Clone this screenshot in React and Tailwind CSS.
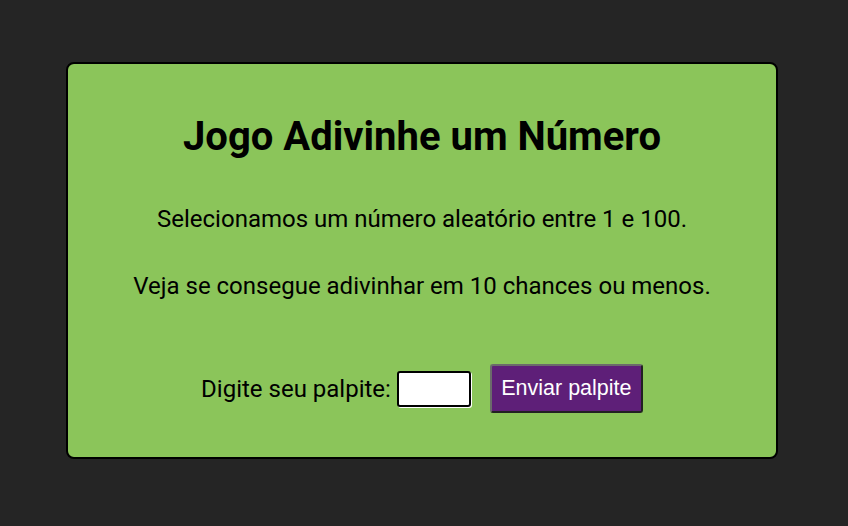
export default function App() {
  return (
    <div className="min-h-[526px] w-full bg-[#252525] pt-[62px]" style={{ fontFamily: "Roboto, 'Liberation Sans', sans-serif" }}>
      <div className="ml-[66px] flex h-[397px] w-[712px] flex-col items-center rounded-[8px] border-2 border-black bg-[#8bc55a] text-black">
        <h1 className="mt-[49px] text-[40px] font-bold leading-[48px]">Jogo Adivinhe um Número</h1>
        <p className="mt-[43px] text-[24px] leading-[30px]">Selecionamos um número aleatório entre 1 e 100.</p>
        <p className="mt-[37px] text-[24px] leading-[30px]">Veja se consegue adivinhar em 10 chances ou menos.</p>
        <div className="mt-[63px] flex items-center">
          <label className="text-[24px] leading-[30px]">Digite seu palpite:</label>
          <input type="text" className="ml-[6px] h-[36px] w-[74px] rounded-[3px] border-2 border-black bg-white shadow-[1px_1px_0_0_#fff] outline-none" />
          <button className="ml-[19px] h-[49px] w-[153px] rounded-[3px] border-2 border-t-[#6b6b6b] border-l-[#6b6b6b] border-r-[#222] border-b-[#222] bg-[#5e1f78] text-[21.5px] text-white" style={{ fontFamily: "'Liberation Sans', Arial, sans-serif" }}>
            Enviar palpite
          </button>
        </div>
      </div>
    </div>
  );
}
